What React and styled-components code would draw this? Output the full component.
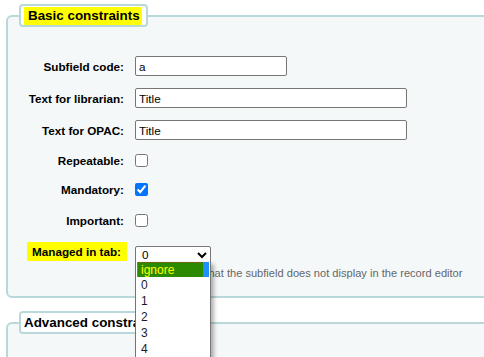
import React from 'react';
import styled, { createGlobalStyle } from 'styled-components';

const GlobalStyle = createGlobalStyle`
  html, body {
    margin: 0;
    background: #fff;
    overflow: hidden;
  }
  body {
    font-family: "Liberation Sans", Arial, sans-serif;
    color: #000;
  }
`;

const Page = styled.div`
  width: 540px;
  padding: 4px 0 0 6px;
`;

const Fieldset = styled.fieldset`
  margin: ${p => p.$top || 0}px 0 0 0;
  padding: 23px 0 14px 0;
  background: #f4f8f9;
  border: 2px solid #b9d8d9;
  border-radius: 6px;
  min-width: 0;
`;

const Legend = styled.legend`
  margin-left: 11px;
  padding: 1px 4px 0 3px;
  background: #fff;
  border: 2px solid #b9d8d9;
  border-radius: 4px;
  font-size: 13.4px;
  font-weight: bold;
  line-height: 18px;
`;

const Marked = styled.span`
  display: inline-block;
  background: #ffff00;
  padding: 0 2px 0 4px;
`;

const Fields = styled.ol`
  list-style: none;
  margin: 0;
  padding: 0;
`;

const Row = styled.li`
  display: grid;
  grid-template-columns: 116px 1fr;
  column-gap: 11px;
  align-items: ${p => (p.$pt ? 'start' : 'center')};
  height: ${p => p.$h}px;
  padding-top: ${p => p.$pt || 0}px;
`;

const Label = styled.label`
  text-align: right;
  font-size: 11.7px;
  font-weight: bold;
  white-space: nowrap;
`;

const LabelMark = styled.span`
  background: #ffff00;
  padding: 3px 6px 3px 5px;
  margin-right: -3px;
`;

const TextInput = styled.input`
  box-sizing: border-box;
  width: ${p => p.$w}px;
  height: 20px;
  margin: 0;
  padding: 1px 3px;
  border: 1px solid #767676;
  border-radius: 2px;
  background: #fff;
  font-family: "Liberation Sans", Arial, sans-serif;
  font-size: 11.7px;
  color: #000;
`;

const Check = styled.input`
  width: 13px;
  height: 13px;
  margin: 0;
`;

const SelectWrap = styled.div`
  position: relative;
  width: 76px;
  height: 18px;
`;

const Select = styled.select`
  box-sizing: border-box;
  width: 76px;
  height: 18px;
  margin: 0;
  padding: 0 0 0 2px;
  border: 1px solid #767676;
  border-radius: 2px;
  background: #fff;
  font-family: "Liberation Sans", Arial, sans-serif;
  font-size: 11.7px;
  color: #000;
`;

const Dropdown = styled.ul`
  position: absolute;
  top: 17px;
  left: 0;
  z-index: 5;
  box-sizing: border-box;
  width: 76px;
  margin: 0;
  padding: 0 0 0 1px;
  list-style: none;
  background: #fff;
  border: 1px solid #767676;
  border-top: none;
  box-shadow: 3px 2px 4px rgba(0, 0, 0, 0.3);
`;

const Option = styled.li`
  height: ${p => (p.$active ? 15 : 16)}px;
  line-height: 16px;
  padding-left: ${p => (p.$active ? 0 : 4)}px;
  font-size: 12px;
  color: #1a1a2e;
  background: ${p => (p.$active ? '#1e90ff' : 'transparent')};
  margin-right: 1px;
`;

const IgnoreChip = styled.span`
  display: block;
  width: 62px;
  height: 14px;
  margin-left: 1px;
  padding-left: 3px;
  line-height: 15px;
  background: #2c8a00;
  border-top: 1px solid #6b6a10;
  color: #ffff00;
`;

const Hint = styled.div`
  font-size: 11.1px;
  color: #666;
  white-space: nowrap;
`;

const Spacer = styled.span``;

const tabs = ['0', '1', '2', '3', '4', '5', '6', '7'];

export default function App() {
  return (
    <Page>
      <GlobalStyle />
      <Fieldset>
        <Legend>
          <Marked>Basic constraints</Marked>
        </Legend>
        <Fields>
          <Row $h={32}>
            <Label>Subfield code:</Label>
            <TextInput $w={152} defaultValue="a" />
          </Row>
          <Row $h={32}>
            <Label>Text for librarian:</Label>
            <TextInput $w={272} defaultValue="Title" />
          </Row>
          <Row $h={32}>
            <Label>Text for OPAC:</Label>
            <TextInput $w={272} defaultValue="Title" />
          </Row>
          <Row $h={28}>
            <Label>Repeatable:</Label>
            <Check type="checkbox" />
          </Row>
          <Row $h={31}>
            <Label>Mandatory:</Label>
            <Check type="checkbox" defaultChecked />
          </Row>
          <Row $h={31}>
            <Label>Important:</Label>
            <Check type="checkbox" />
          </Row>
          <Row $h={19} $pt={9}>
            <Label>
              <LabelMark>Managed in tab:</LabelMark>
            </Label>
            <SelectWrap>
              <Select defaultValue="0">
                <option value="-1">ignore</option>
                {tabs.map(t => (
                  <option key={t} value={t}>{t}</option>
                ))}
              </Select>
              <Dropdown>
                <Option $active>
                  <IgnoreChip>ignore</IgnoreChip>
                </Option>
                {tabs.map(t => (
                  <Option key={t}>{t}</Option>
                ))}
              </Dropdown>
            </SelectWrap>
          </Row>
          <Row $h={18}>
            <Spacer />
            <Hint>ignore means that the subfield does not display in the record editor</Hint>
          </Row>
        </Fields>
      </Fieldset>
      <Fieldset $top={13}>
        <Legend>Advanced constraints</Legend>
        <Fields>
          <Row $h={40}>
            <Spacer />
          </Row>
        </Fields>
      </Fieldset>
    </Page>
  );
}
